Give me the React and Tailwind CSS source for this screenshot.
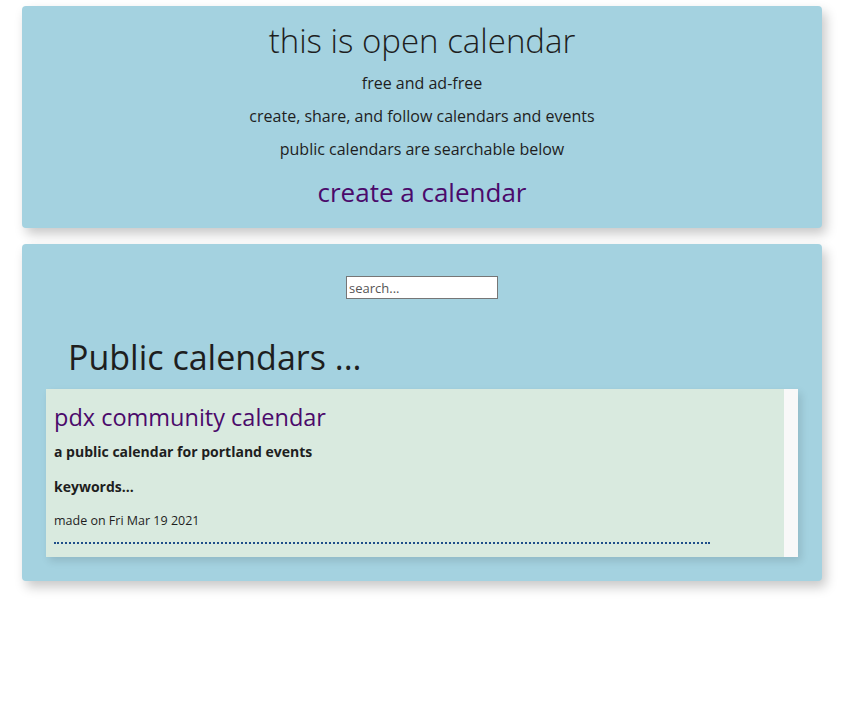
export default function App() {
  return (
    <div className="min-h-[717px] bg-white pt-[6px] text-[#1e1e1e]" style={{ fontFamily: '"Open Sans", sans-serif' }}>
      <div className="mx-[22px] w-[800px] rounded-[4px] bg-[#a4d2e0] pt-[16px] pb-[21px] text-center shadow-[4px_6px_12px_rgba(0,0,0,0.22)]">
        <h1 className="text-[33px] leading-[38px] font-light">this is open calendar</h1>
        <p className="mt-[14px] text-[16px] leading-[19px]">free and ad-free</p>
        <p className="mt-[14px] text-[16px] leading-[19px]">create, share, and follow calendars and events</p>
        <p className="mt-[14px] text-[16px] leading-[19px]">public calendars are searchable below</p>
        <a className="mt-[19px] block text-[26px] leading-[29px] text-[#4b0a6b]">create a calendar</a>
      </div>

      <div className="mx-[22px] mt-[16px] w-[800px] rounded-[4px] bg-[#a4d2e0] px-[24px] pt-[32px] pb-[24px] shadow-[4px_6px_12px_rgba(0,0,0,0.22)]">
        <div className="flex justify-center">
          <input
            placeholder="search..."
            className="h-[23px] w-[152px] border border-[#767676] bg-white px-[2px] text-[13px] text-black placeholder:text-[#555]"
          />
        </div>
        <h2 className="mt-[38px] ml-[22px] text-[34px] leading-[41px] font-normal">Public calendars ...</h2>
        <div className="mt-[11px] flex h-[168px] bg-[#d9eadf] shadow-[3px_4px_8px_rgba(0,0,0,0.12)]">
          <div className="flex-1 pl-[8px] pt-[15px]">
            <div className="text-[23.5px] leading-[27px] text-[#4b0a6b]">pdx community calendar</div>
            <div className="mt-[12px] text-[14px] leading-[18px] font-bold">a public calendar for portland events</div>
            <div className="mt-[17px] text-[14px] leading-[18px] font-bold">keywords...</div>
            <div className="mt-[17px] text-[12.5px] leading-[16px]">made on Fri Mar 19 2021</div>
            <div className="mt-[13px] w-[656px] border-b-2 border-dotted border-[#1f4e89]"></div>
          </div>
          <div className="w-[14px] bg-[#f8f8f8]"></div>
        </div>
      </div>
    </div>
  );
}
